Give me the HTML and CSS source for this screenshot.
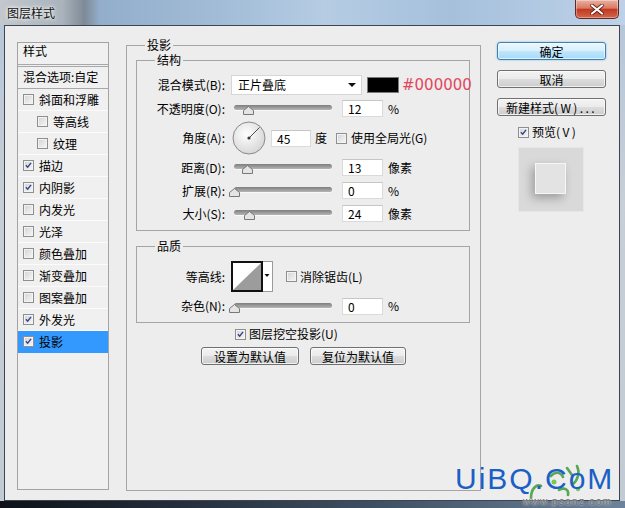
FILE: index.html
```html
<!DOCTYPE html>
<html lang="zh-CN">
<head>
  <meta charset="UTF-8" />
  <title>图层样式</title>
  <link rel="stylesheet" href="styles.css">
</head>
<body>
  <div class="titlebar">
    <span class="title">图层样式</span>
    <button class="close-btn">
      <svg width="14" height="11" viewBox="0 0 14 11"><path d="M2 1.5 L12 9.5 M12 1.5 L2 9.5" stroke="#5a1a10" stroke-width="3.6" stroke-linecap="round"/><path d="M2 1.5 L12 9.5 M12 1.5 L2 9.5" stroke="#fff" stroke-width="2.2" stroke-linecap="round"/></svg>
    </button>
  </div>

  <div class="client">
    <div class="style-list">
      <div class="list-head">样式</div>
      <div class="list-blend">混合选项:自定</div>
      <div class="list-item"><span class="cb"></span><span class="txt">斜面和浮雕</span></div>
      <div class="list-item sub"><span class="cb"></span><span class="txt">等高线</span></div>
      <div class="list-item sub"><span class="cb"></span><span class="txt">纹理</span></div>
      <div class="list-item"><span class="cb on"><svg viewBox="0 0 11 11"><path d="M2.3 5.2 L4.5 7.6 L8.6 2.3"/></svg></span><span class="txt">描边</span></div>
      <div class="list-item"><span class="cb on"><svg viewBox="0 0 11 11"><path d="M2.3 5.2 L4.5 7.6 L8.6 2.3"/></svg></span><span class="txt">内阴影</span></div>
      <div class="list-item"><span class="cb"></span><span class="txt">内发光</span></div>
      <div class="list-item"><span class="cb"></span><span class="txt">光泽</span></div>
      <div class="list-item"><span class="cb"></span><span class="txt">颜色叠加</span></div>
      <div class="list-item"><span class="cb"></span><span class="txt">渐变叠加</span></div>
      <div class="list-item"><span class="cb"></span><span class="txt">图案叠加</span></div>
      <div class="list-item"><span class="cb on"><svg viewBox="0 0 11 11"><path d="M2.3 5.2 L4.5 7.6 L8.6 2.3"/></svg></span><span class="txt">外发光</span></div>
      <div class="list-item selected"><span class="cb on"><svg viewBox="0 0 11 11"><path d="M2.3 5.2 L4.5 7.6 L8.6 2.3"/></svg></span><span class="txt">投影</span></div>
    </div>

    <div class="group main-group">
      <div class="group-title">投影</div>

      <div class="group structure">
        <div class="group-title">结构</div>
        <div class="rows">
          <div class="row first">
            <span class="lbl">混合模式(B):</span>
            <div class="select">正片叠底<span class="arrow"></span></div>
            <span class="swatch"></span>
            <span class="hex">#000000</span>
          </div>
          <div class="row">
            <span class="lbl">不透明度(O):</span>
            <div class="slider"><div class="track"></div><svg class="thumb" style="left: 12px" width="11" height="9" viewBox="0 0 11 9"><polygon points="5.5,0.5 10.5,4.5 10.5,8.5 0.5,8.5 0.5,4.5"/></svg></div>
            <span class="num">12</span>
            <span class="unit">%</span>
          </div>
          <div class="row angle">
            <span class="lbl">角度(A):</span>
            <svg class="dial" width="34" height="34" viewBox="0 0 34 34">
              <defs><radialGradient id="dialFill" cx="42%" cy="38%" r="70%"><stop offset="0" stop-color="#ffffff"/><stop offset="1" stop-color="#d2d2d2"/></radialGradient></defs>
              <circle cx="17" cy="17" r="16" fill="url(#dialFill)" stroke="#8a8a8a"/>
              <line x1="17" y1="17" x2="27.6" y2="6.4" stroke="#4d4d4d"/>
              <circle cx="17" cy="17" r="1.6" fill="#3a3a3a"/>
            </svg>
            <span class="num short">45</span>
            <span class="unit">度</span>
            <span class="cb global"></span>
            <span class="cb-label">使用全局光(G)</span>
          </div>
          <div class="row">
            <span class="lbl">距离(D):</span>
            <div class="slider"><div class="track"></div><svg class="thumb" style="left: 11px" width="11" height="9" viewBox="0 0 11 9"><polygon points="5.5,0.5 10.5,4.5 10.5,8.5 0.5,8.5 0.5,4.5"/></svg></div>
            <span class="num">13</span>
            <span class="unit">像素</span>
          </div>
          <div class="row">
            <span class="lbl">扩展(R):</span>
            <div class="slider"><div class="track"></div><svg class="thumb" style="left: -2px" width="11" height="9" viewBox="0 0 11 9"><polygon points="5.5,0.5 10.5,4.5 10.5,8.5 0.5,8.5 0.5,4.5"/></svg></div>
            <span class="num">0</span>
            <span class="unit">%</span>
          </div>
          <div class="row">
            <span class="lbl">大小(S):</span>
            <div class="slider"><div class="track"></div><svg class="thumb" style="left: 13px" width="11" height="9" viewBox="0 0 11 9"><polygon points="5.5,0.5 10.5,4.5 10.5,8.5 0.5,8.5 0.5,4.5"/></svg></div>
            <span class="num">24</span>
            <span class="unit">像素</span>
          </div>
        </div>
      </div>

      <div class="group quality">
        <div class="group-title">品质</div>
        <div class="row contour-row">
          <span class="lbl">等高线:</span>
          <svg class="contour" width="42" height="31" viewBox="0 0 42 31">
            <rect x="0.5" y="0.5" width="41" height="30" fill="#fff" stroke="#9a9a9a"/>
            <rect x="1" y="1" width="30" height="29" fill="#fff" stroke="#111" stroke-width="2"/>
            <polygon points="2,29 30,2 30,29" fill="#9c9c9c"/>
            <polygon points="33.5,13 38.5,13 36,16" fill="#111"/>
          </svg>
          <span class="cb aa"></span>
          <span class="cb-label">消除锯齿(L)</span>
        </div>
        <div class="row noise-row">
          <span class="lbl">杂色(N):</span>
          <div class="slider"><div class="track"></div><svg class="thumb" style="left: -2px" width="11" height="9" viewBox="0 0 11 9"><polygon points="5.5,0.5 10.5,4.5 10.5,8.5 0.5,8.5 0.5,4.5"/></svg></div>
          <span class="num">0</span>
          <span class="unit">%</span>
        </div>
      </div>

      <div class="knockout">
        <span class="cb on"><svg viewBox="0 0 11 11"><path d="M2.3 5.2 L4.5 7.6 L8.6 2.3"/></svg></span>
        <span class="cb-label">图层挖空投影(U)</span>
      </div>
      <div class="btn-row">
        <button class="btn wide">设置为默认值</button>
        <button class="btn">复位为默认值</button>
      </div>
    </div>

    <div class="actions">
      <button class="btn default">确定</button>
      <button class="btn">取消</button>
      <button class="btn">新建样式<span class="latin">(W)...</span></button>
      <div class="preview-toggle">
        <span class="cb on"><svg viewBox="0 0 11 11"><path d="M2.3 5.2 L4.5 7.6 L8.6 2.3"/></svg></span>
        <span class="cb-label">预览<span class="latin">(V)</span></span>
      </div>
      <div class="preview-box"><div class="preview-square"></div></div>
    </div>
  </div>
  <div class="bottom-edge"></div>

  <div class="watermark">
    <svg class="wm-art" width="70" height="40" viewBox="0 0 70 40">
      <path d="M14 36 C14 26 20 22 24 24 M34 14 C38 9 44 10 46 15 M50 6 L55 13 M60 4 C63 10 61 18 56 22 M42 28 C47 25 52 27 51 33" fill="none" stroke="#3f9b3a" stroke-width="2.6" stroke-linecap="round"/>
      <circle cx="37" cy="20" r="2.5" fill="#6cbf3c"/>
      <circle cx="61" cy="27" r="2.2" fill="#6cbf3c"/>
    </svg>
    <span class="wm-text">UiBQ.CoM</span>
    <span class="wm-url">www.psanz.com</span>
  </div>
</body>
</html>
```

FILE: styles.css
```css
* { box-sizing: border-box; }

body {
  margin: 0;
  width: 625px;
  height: 508px;
  overflow: hidden;
  position: relative;
  font-family: "Noto Sans CJK SC", "Liberation Sans", sans-serif;
  font-size: 12px;
  line-height: 16px;
  color: #000;
  background: linear-gradient(to bottom, #b4c6da 0, #c7ced6 40%, #c2cad3 100%);
}

/* window chrome */
.titlebar {
  height: 25px;
  display: flex;
  align-items: flex-start;
  justify-content: space-between;
  padding-left: 7px;
  background: linear-gradient(to right, #c2c8cd 0, #aab3bc 10%, #7e8a97 13.5%, #93aecb 16%, #a2bcd7 35%, #b5cce3 52%, #a6c0dc 72%, #bdd2e8 100%);
}
.title {
  margin-top: 5px;
  color: #111;
  text-shadow: 0 0 5px #fff, 0 0 3px #fff;
}
.close-btn {
  width: 44px;
  height: 19px;
  margin-right: 6px;
  padding: 0;
  display: flex;
  align-items: center;
  justify-content: center;
  border: 1px solid #5e2a22;
  border-top: none;
  border-radius: 0 0 5px 5px;
  background: linear-gradient(#eab0a2 0, #d97a63 45%, #c2391f 52%, #d4664d 100%);
  box-shadow: inset 0 0 0 1px rgba(255, 255, 255, 0.35);
}

.client {
  margin-left: 4px;
  width: 616px;
  height: 476px;
  border: 1px solid #3d4550;
  background: #ededed;
  display: flex;
  align-items: flex-start;
  padding: 16px 0 0 12px;
}
.bottom-edge {
  height: 7px;
  background: linear-gradient(to right, #0e1218 0, #1d2530 20%, #3f4f62 60%, #6d839b 100%);
}

/* checkboxes */
.cb {
  width: 11px;
  height: 11px;
  flex: none;
  display: inline-flex;
  border: 1px solid #8e8f8f;
  background: linear-gradient(135deg, #d3d3d3, #f7f7f7);
  box-shadow: inset 0 0 0 1px #f3f3f3;
}
.cb svg { width: 9px; height: 9px; }
.cb path {
  fill: none;
  stroke: #33448a;
  stroke-width: 1.7;
}
.cb-label { margin-left: 3px; white-space: nowrap; }

/* style list */
.style-list {
  width: 92px;
  height: 448px;
  flex: none;
  margin-right: 17px;
  border: 1px solid #a3a3a3;
  background: #f0f0f0;
}
.list-head {
  height: 22px;
  padding-left: 5px;
  border-bottom: 1px solid #a8a8a8;
}
.list-blend {
  height: 23px;
  margin-top: 1px;
  padding-left: 5px;
  line-height: 19px;
  border-top: 1px solid #a8a8a8;
  border-bottom: 1px solid #a8a8a8;
  white-space: nowrap;
}
.list-item {
  height: 22px;
  display: flex;
  align-items: center;
  padding-left: 5px;
  border-bottom: 1px solid #fbfbfb;
}
.list-item.sub { padding-left: 19px; }
.list-item .txt { margin-left: 5px; }
.list-item.selected { background: #3399ff; border-bottom-color: #3399ff; }

/* group boxes */
.group { border: 1px solid #a5a5a5; }
.group-title {
  display: table;
  margin: -9px 0 6px 18px;
  padding: 0 2px;
  background: #ededed;
}
.main-group {
  width: 355px;
  height: 446px;
  flex: none;
  margin-top: 3px;
}
.structure {
  margin: 7px 10px 0 9px;
  padding-bottom: 6px;
}
.quality {
  margin: 15px 10px 0 9px;
  padding-bottom: 6px;
}

.rows {
  display: flex;
  flex-direction: column;
  gap: 2px;
}
.row {
  height: 21px;
  display: flex;
  align-items: center;
}
.row.first { height: 22px; }
.row.angle { height: 34px; }
.row.contour-row { height: 33px; }
.row.noise-row { height: 20px; margin-top: 3px; }

.lbl {
  width: 88px;
  flex: none;
  margin-right: 6px;
  text-align: right;
  white-space: nowrap;
}

.select {
  width: 131px;
  height: 20px;
  flex: none;
  display: flex;
  align-items: center;
  justify-content: space-between;
  padding: 0 5px 0 6px;
  border: 1px solid #d6d6d6;
  background: #fff;
}
.arrow {
  width: 0;
  height: 0;
  border-left: 4px solid transparent;
  border-right: 4px solid transparent;
  border-top: 4px solid #111;
}
.swatch {
  width: 32px;
  height: 16px;
  flex: none;
  margin-left: 5px;
  background: #000;
  border: 1px solid #7a7a7a;
}
.hex {
  margin-left: 3px;
  font-family: "DejaVu Sans", sans-serif;
  font-size: 15px;
  color: #e2475d;
}

.slider {
  position: relative;
  width: 104px;
  height: 21px;
  flex: none;
}
.track {
  height: 5px;
  margin: 7px 3px 0;
  border-radius: 3px;
  background: linear-gradient(#7e7e7e, #b5b5b5);
  box-shadow: 0 1px 0 #f8f8f8;
}
.thumb {
  position: absolute;
  top: 8px;
}
.thumb polygon {
  fill: #e4e4e4;
  stroke: #787878;
}

.num {
  width: 41px;
  height: 17px;
  flex: none;
  margin-left: 7px;
  padding-left: 5px;
  line-height: 15px;
  border: 1px solid #dadada;
  border-top-color: #c6c6c6;
  background: #fff;
}
.num.short { width: 40px; margin-left: 5px; }
.unit { margin-left: 5px; }

.dial { flex: none; margin-left: 1px; }
.angle .unit { margin-left: 4px; }
.cb.global { margin-left: 9px; }
.angle .cb-label { margin-left: 4px; }

.contour { flex: none; }
.cb.aa { margin-left: 13px; }

.knockout {
  height: 20px;
  margin: 1px 0 0 108px;
  display: flex;
  align-items: center;
}
.btn-row {
  display: flex;
  justify-content: center;
  gap: 11px;
  margin-top: 3px;
}

/* buttons */
.btn {
  width: 96px;
  height: 18px;
  padding: 0;
  font: inherit;
  line-height: 15px;
  color: #000;
  border: 1px solid #707070;
  border-radius: 3px;
  background: linear-gradient(#f3f3f3 0, #ebebeb 48%, #dcdcdc 52%, #cdcdcd 100%);
  box-shadow: inset 0 0 0 1px rgba(255, 255, 255, 0.7);
}
.btn.wide { width: 98px; }
.btn.default {
  border-color: #3c7fb1;
  background: linear-gradient(#eaf6fd 0, #d9f0fc 48%, #bee6fd 52%, #a7d9f5 100%);
  box-shadow: inset 0 0 0 1px rgba(255, 255, 255, 0.6), 0 0 2px #6fb7e6;
}

.actions {
  width: 109px;
  flex: none;
  margin-left: 16px;
  display: flex;
  flex-direction: column;
  gap: 10px;
}
.actions .btn { width: 109px; }
.latin { letter-spacing: 2.4px; }
.preview-toggle {
  height: 16px;
  margin: -2px 0 0 21px;
  display: flex;
  align-items: center;
}
.preview-box {
  width: 66px;
  height: 65px;
  margin: -3px 0 0 21px;
  border: 1px solid #e6e6e6;
  background: #d9d9d9;
  display: flex;
  align-items: flex-start;
}
.preview-square {
  width: 31px;
  height: 31px;
  margin: 15px 0 0 16px;
  border: 1px solid #f6f6f6;
  background: #e3e3e3;
  box-shadow: -3px 4px 9px rgba(0, 0, 0, 0.28);
}

/* watermark overlay */
.watermark {
  position: absolute;
  left: 455px;
  top: 462px;
  width: 165px;
  height: 46px;
}
.wm-art {
  position: absolute;
  left: 62px;
  top: 0;
  opacity: 0.85;
}
.wm-text {
  position: absolute;
  left: 0;
  top: 5px;
  font-family: "Liberation Sans", sans-serif;
  font-size: 30px;
  line-height: 24px;
  letter-spacing: 2px;
  color: #1a5fc6;
}
.wm-url {
  position: absolute;
  left: 68px;
  top: 35px;
  font-family: "Liberation Sans", sans-serif;
  font-size: 10px;
  line-height: 10px;
  letter-spacing: 1.3px;
  color: #6c6c6c;
  text-shadow: 0 0 2px #fff;
}
```
